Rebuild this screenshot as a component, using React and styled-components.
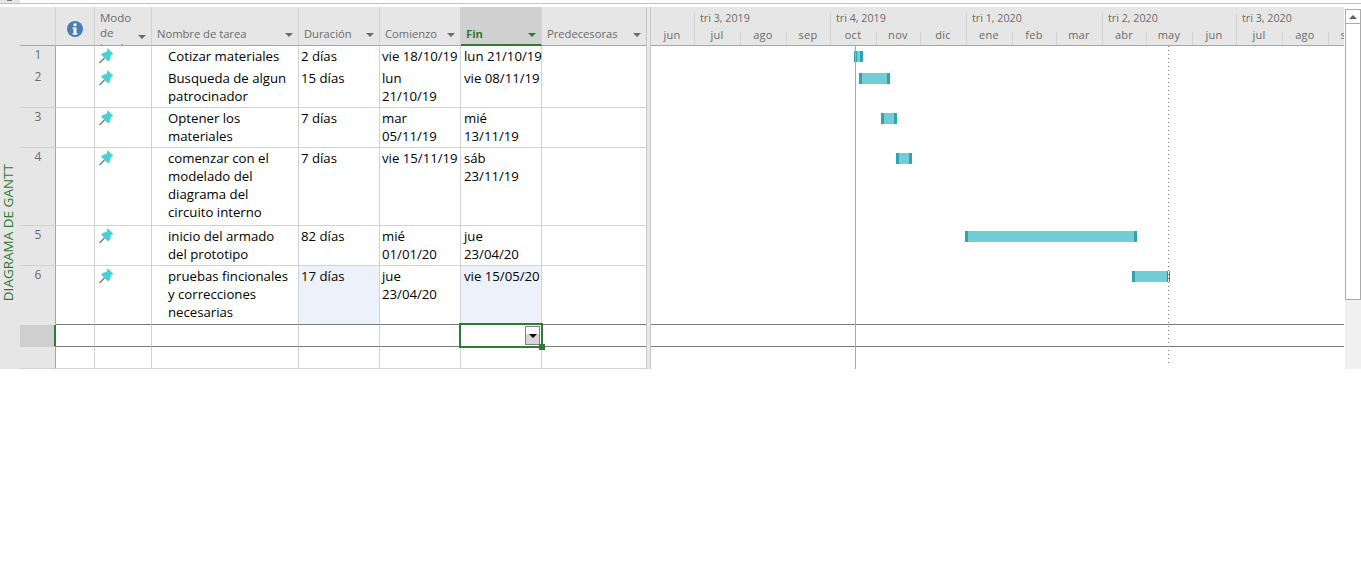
import styled, { createGlobalStyle } from 'styled-components';

const GlobalStyle = createGlobalStyle`
  html, body {
    margin: 0;
    padding: 0;
    background: #fff;
  }
  body {
    font-family: "Open Sans", "Noto Sans", sans-serif;
  }
`;

const ROWS = [
  { id: 1, height: 22, name: 'Cotizar materiales', dur: '2 días', start: 'vie 18/10/19', end: 'lun 21/10/19', bar: [854, 863] },
  { id: 2, height: 40, name: 'Busqueda de algun\npatrocinador', dur: '15 días', start: 'lun\n21/10/19', end: 'vie 08/11/19', bar: [859, 890] },
  { id: 3, height: 40, name: 'Optener los\nmateriales', dur: '7 días', start: 'mar\n05/11/19', end: 'mié\n13/11/19', bar: [881, 897] },
  { id: 4, height: 78, name: 'comenzar con el\nmodelado del\ndiagrama del\ncircuito interno', dur: '7 días', start: 'vie 15/11/19', end: 'sáb\n23/11/19', bar: [896, 912] },
  { id: 5, height: 40, name: 'inicio del armado\ndel prototipo', dur: '82 días', start: 'mié\n01/01/20', end: 'jue\n23/04/20', bar: [965, 1137] },
  { id: 6, height: 59, name: 'pruebas fincionales\ny correcciones\nnecesarias', dur: '17 días', start: 'jue\n23/04/20', end: 'vie 15/05/20', bar: [1132, 1170], edited: true, dark: true },
];

const QUARTERS = [
  { label: '', width: 44 },
  { label: 'tri 3, 2019', width: 136 },
  { label: 'tri 4, 2019', width: 136 },
  { label: 'tri 1, 2020', width: 136 },
  { label: 'tri 2, 2020', width: 134 },
  { label: 'tri 3, 2020', width: 107 },
];

const MONTHS = [
  { label: 'jun', width: 44, major: true },
  { label: 'jul', width: 46 },
  { label: 'ago', width: 46 },
  { label: 'sep', width: 44, major: true },
  { label: 'oct', width: 46 },
  { label: 'nov', width: 44 },
  { label: 'dic', width: 46, major: true },
  { label: 'ene', width: 46 },
  { label: 'feb', width: 44 },
  { label: 'mar', width: 46, major: true },
  { label: 'abr', width: 44 },
  { label: 'may', width: 46 },
  { label: 'jun', width: 44, major: true },
  { label: 'jul', width: 46 },
  { label: 'ago', width: 46 },
  { label: 'sep', width: 44 },
];

const CHART_LEFT = 651;
const columns = '36px 39px 57px 147px 81px 81px 81px 104px';

const Page = styled.div`
  height: 369px;
  overflow: hidden;
  display: flex;
  flex-direction: column;
`;

const TopStrip = styled.div`
  height: 7px;
  flex: none;
  background: linear-gradient(#fff 3px, #c2c2c2 3px, #c2c2c2 4px, #fff 4px);
`;

const CornerTab = styled.div`
  width: 20px;
  height: 3px;
  background: #e6e6e6;
  display: flex;
  padding-left: 7px;
  box-sizing: border-box;
  &::before {
    content: '';
    width: 5px;
    height: 1px;
    background: #777;
  }
`;

const Main = styled.div`
  flex: 1;
  display: flex;
  min-height: 0;
`;

const SideLabel = styled.div`
  width: 20px;
  flex: none;
  background: #e6e6e6;
  display: flex;
  justify-content: flex-start;
  align-items: flex-end;
  padding-bottom: 68px;
  box-sizing: border-box;
`;

const SideText = styled.span`
  writing-mode: vertical-rl;
  transform: rotate(180deg);
  font-size: 13.5px;
  line-height: 16px;
  color: #2f7a35;
  white-space: nowrap;
`;

const Table = styled.div`
  width: 626px;
  flex: none;
`;

const HeaderRow = styled.div`
  display: grid;
  grid-template-columns: ${columns};
  height: 39px;
`;

const HeaderCell = styled.div`
  display: flex;
  align-items: flex-end;
  justify-content: space-between;
  overflow: hidden;
  box-sizing: border-box;
  padding: ${p => (p.$active ? '0 5px 3px 5px' : '0 5px 4px 5px')};
  background: ${p => (p.$active ? '#d0d0d0' : '#e6e6e6')};
  border-right: ${p => (p.$last ? 'none' : '1px solid #d2d2d2')};
  border-bottom: ${p => (p.$active ? '2px solid #2f7a35' : '1px solid #a6a6a6')};
  font-size: 11.2px;
  line-height: 15px;
  color: ${p => (p.$active ? '#2f7a35' : '#6b6b6b')};
  font-weight: ${p => (p.$active ? 700 : 400)};
`;

const InfoCell = styled(HeaderCell)`
  align-items: center;
  justify-content: center;
  padding: 6px 0 0 0;
`;

const ModeCell = styled(HeaderCell)`
  align-items: flex-start;
  padding: 3px 5px 0 5px;
`;

const HeaderLabel = styled.span`
  white-space: nowrap;
`;

const StackedLabel = styled.span`
  width: 36px;
  flex: none;
  font-size: 11.5px;
  overflow-wrap: anywhere;
`;

const SortArrow = styled.i`
  flex: none;
  width: 0;
  height: 0;
  margin-bottom: 4px;
  border-left: 4px solid transparent;
  border-right: 4px solid transparent;
  border-top: 4px solid ${p => (p.$active ? '#2f7a35' : '#6b6b6b')};
`;

const StackedArrow = styled(SortArrow)`
  margin-top: 25px;
  margin-bottom: 0;
`;

const Row = styled.div`
  display: grid;
  grid-template-columns: ${columns};
  height: ${p => p.$height}px;
`;

const RowNumber = styled.div`
  box-sizing: border-box;
  background: ${p => (p.$current ? '#cfcfcf' : '#e6e6e6')};
  border-right: ${p => (p.$current ? '2px solid #2f7a35' : '1px solid #a6a6a6')};
  border-bottom: 1px solid ${p => (p.$current || p.$noLine ? 'transparent' : '#d2d2d2')};
  font-size: 12px;
  line-height: 18px;
  color: #6b6b6b;
  text-align: center;
  padding-left: 1px;
`;

const Cell = styled.div`
  box-sizing: border-box;
  position: relative;
  white-space: pre;
  padding: 1px 0 0 ${p => p.$indent || 2}px;
  font-size: 13.2px;
  line-height: 18px;
  color: #000;
  background: ${p => (p.$edited ? '#edf1fc' : '#fff')};
  border-right: ${p => (p.$last ? 'none' : '1px solid #d2d2d2')};
  border-bottom: 1px solid ${p => (p.$dark ? '#7a7a7a' : '#d2d2d2')};
`;

const PinCell = styled(Cell)`
  padding: 2px 0 0 4px;
`;

const SelectedBox = styled.div`
  position: absolute;
  z-index: 1;
  left: -2px;
  top: -2px;
  right: -2px;
  bottom: -2px;
  border: 2px solid #2f7a35;
  display: flex;
  justify-content: flex-end;
  padding: 1px 1px 0;
`;

const DropButton = styled.div`
  width: 15px;
  height: 19px;
  box-sizing: border-box;
  border: 1px solid #7f7f7f;
  background: linear-gradient(#fff 40%, #d6d6d6 40%);
  display: flex;
  align-items: center;
  justify-content: center;
  &::before {
    content: '';
    border-left: 4px solid transparent;
    border-right: 4px solid transparent;
    border-top: 4px solid #000;
  }
`;

const FillHandle = styled.div`
  position: absolute;
  right: -4px;
  bottom: -4px;
  width: 6px;
  height: 6px;
  background: #2f7a35;
`;

const Splitter = styled.div`
  width: 5px;
  flex: none;
  box-sizing: border-box;
  background: #e8e8e8;
  border-left: 1px solid #c6c6c6;
  border-right: 1px solid #c6c6c6;
`;

const Chart = styled.div`
  flex: none;
  width: 693px;
  position: relative;
  overflow: hidden;
`;

const TimeHeader = styled.div`
  height: 39px;
  box-sizing: border-box;
  background: #e6e6e6;
  border-bottom: 1px solid #a6a6a6;
  overflow: hidden;
`;

const QuarterRow = styled.div`
  display: flex;
  height: 19px;
  padding-top: 7px;
  box-sizing: border-box;
`;

const Quarter = styled.div`
  flex: none;
  width: ${p => p.$width}px;
  box-sizing: border-box;
  padding-left: 5px;
  border-right: 1px solid #d2d2d2;
  font-size: 10.7px;
  line-height: 8px;
  color: #6b6b6b;
  white-space: nowrap;
  &:last-child {
    border-right: none;
  }
`;

const MonthRow = styled.div`
  display: flex;
  height: 19px;
`;

const Month = styled.div`
  flex: none;
  width: ${p => p.$width}px;
  box-sizing: border-box;
  position: relative;
  text-align: center;
  padding-right: 2px;
  font-size: 11px;
  line-height: 18px;
  letter-spacing: 0.3px;
  color: #6b6b6b;
  &::after {
    content: '';
    position: absolute;
    right: 0;
    bottom: 0;
    width: 1px;
    height: ${p => (p.$major ? '19px' : '13px')};
    background: #d2d2d2;
  }
`;

const ChartRow = styled.div`
  height: ${p => p.$height}px;
  box-sizing: border-box;
  padding-top: 5px;
  display: flex;
  border-bottom: ${p => (p.$dark ? '1px solid #7a7a7a' : 'none')};
`;

const Bar = styled.div`
  height: 11px;
  margin-left: ${p => p.$left}px;
  width: ${p => p.$width}px;
  display: flex;
  background: #72cdd6;
  justify-content: space-between;
`;

const BarCap = styled.span`
  width: 3px;
  background: #2ba5ae;
`;

const FinishCap = styled.span`
  width: 3px;
  box-sizing: border-box;
  background: #fff;
  border-left: 1px solid #2f8f98;
  border-right: 1px solid #2f8f98;
`;

const StartLine = styled.div`
  position: absolute;
  left: 204px;
  top: 39px;
  bottom: 0;
  width: 1px;
  background: #8fbb8f;
`;

const StatusLine = styled.div`
  position: absolute;
  left: 517px;
  top: 39px;
  bottom: 3px;
  width: 1px;
  background: repeating-linear-gradient(#7f7f7f 0 1px, transparent 1px 4px);
`;

const Scrollbar = styled.div`
  width: 16px;
  flex: none;
  margin-left: 1px;
  display: flex;
  flex-direction: column;
  background: #f0f0f0;
`;

const ScrollTop = styled.div`
  height: 2px;
  background: #fff;
`;

const ScrollButton = styled.div`
  height: 15px;
  box-sizing: border-box;
  border: 1px solid #ababab;
  background: #fff;
  display: flex;
  align-items: center;
  justify-content: center;
  &::before {
    content: '';
    border-left: 4px solid transparent;
    border-right: 4px solid transparent;
    border-bottom: 4px solid #606060;
  }
`;

const ScrollThumb = styled.div`
  height: 276px;
  box-sizing: border-box;
  border: 1px solid #ababab;
  border-top: none;
  background: #fff;
`;

const InfoIcon = () => (
  <svg width="16" height="16" viewBox="0 0 16 16">
    <circle cx="8" cy="8" r="8" fill="#4a7db5" />
    <rect x="6.5" y="2.5" width="3" height="2.6" fill="#fff" />
    <rect x="6.5" y="6.5" width="3" height="7" fill="#fff" />
    <rect x="5.5" y="6.5" width="2" height="1.2" fill="#fff" />
    <rect x="5.5" y="12.3" width="5" height="1.2" fill="#fff" />
  </svg>
);

const PinIcon = () => (
  <svg width="16" height="16" viewBox="0 0 16 16">
    <path d="M0.5 15 L5.5 10" stroke="#6f6f6f" strokeWidth="1.3" fill="none" />
    <path d="M8.5 0 L14.5 6 L12 7 L11 11.5 L9 13.5 L2 6.5 L4 5 L8 3.5 Z" fill="#45d3d8" />
  </svg>
);

const App = () => {
  const bars = ROWS.map(r => ({ left: r.bar[0] - CHART_LEFT, width: r.bar[1] - r.bar[0] }));

  return (
    <Page>
      <GlobalStyle />
      <TopStrip>
        <CornerTab />
      </TopStrip>
      <Main>
        <SideLabel>
          <SideText>DIAGRAMA DE GANTT</SideText>
        </SideLabel>
        <Table>
          <HeaderRow>
            <HeaderCell />
            <InfoCell><InfoIcon /></InfoCell>
            <ModeCell>
              <StackedLabel>Modo de implementación</StackedLabel>
              <StackedArrow />
            </ModeCell>
            <HeaderCell><HeaderLabel>Nombre de tarea</HeaderLabel><SortArrow /></HeaderCell>
            <HeaderCell><HeaderLabel>Duración</HeaderLabel><SortArrow /></HeaderCell>
            <HeaderCell><HeaderLabel>Comienzo</HeaderLabel><SortArrow /></HeaderCell>
            <HeaderCell $active><HeaderLabel>Fin</HeaderLabel><SortArrow $active /></HeaderCell>
            <HeaderCell $last><HeaderLabel>Predecesoras</HeaderLabel><SortArrow /></HeaderCell>
          </HeaderRow>
          {ROWS.map(r => (
            <Row key={r.id} $height={r.height}>
              <RowNumber $noLine={r.dark}>{r.id}</RowNumber>
              <Cell $dark={r.dark} />
              <PinCell $dark={r.dark}><PinIcon /></PinCell>
              <Cell $indent={16} $dark={r.dark}>{r.name}</Cell>
              <Cell $edited={r.edited} $dark={r.dark}>{r.dur}</Cell>
              <Cell $dark={r.dark}>{r.start}</Cell>
              <Cell $indent={3} $edited={r.edited} $dark={r.dark}>{r.end}</Cell>
              <Cell $last $dark={r.dark} />
            </Row>
          ))}
          <Row $height={22}>
            <RowNumber $current />
            <Cell $dark />
            <Cell $dark />
            <Cell $dark />
            <Cell $dark />
            <Cell $dark />
            <Cell $dark>
              <SelectedBox>
                <DropButton />
                <FillHandle />
              </SelectedBox>
            </Cell>
            <Cell $last $dark />
          </Row>
          <Row $height={22}>
            <RowNumber />
            <Cell />
            <Cell />
            <Cell />
            <Cell />
            <Cell />
            <Cell />
            <Cell $last />
          </Row>
        </Table>
        <Splitter />
        <Chart>
          <TimeHeader>
            <QuarterRow>
              {QUARTERS.map((q, i) => (
                <Quarter key={i} $width={q.width}>{q.label}</Quarter>
              ))}
            </QuarterRow>
            <MonthRow>
              {MONTHS.map((m, i) => (
                <Month key={i} $width={m.width} $major={m.major}>{m.label}</Month>
              ))}
            </MonthRow>
          </TimeHeader>
          {ROWS.map((r, i) => (
            <ChartRow key={r.id} $height={r.height} $dark={r.dark}>
              <Bar $left={bars[i].left} $width={bars[i].width}>
                <BarCap />
                {r.edited ? <FinishCap /> : <BarCap />}
              </Bar>
            </ChartRow>
          ))}
          <ChartRow $height={22} $dark />
          <ChartRow $height={22} />
          <StartLine />
          <StatusLine />
        </Chart>
        <Scrollbar>
          <ScrollTop />
          <ScrollButton />
          <ScrollThumb />
        </Scrollbar>
      </Main>
    </Page>
  );
};

export default App;
